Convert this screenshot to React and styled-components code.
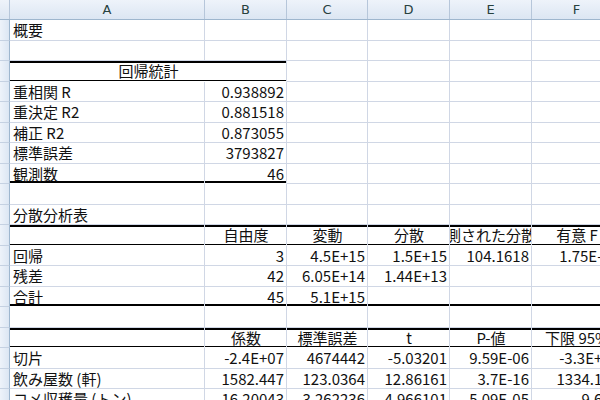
import React from "react";
import styled, { createGlobalStyle, css } from "styled-components";

const Global = createGlobalStyle`
  html, body { margin: 0; padding: 0; background: #fff; overflow: hidden; }
  body { font-family: "Noto Sans CJK JP", "DejaVu Sans", sans-serif; }
`;

const Sheet = styled.div`
  width: 600px;
  height: 400px;
  overflow: hidden;
`;

const COLS = "10px 195px 82px 81px 82px 82px 90px";

const HeaderRow = styled.div`
  display: grid;
  grid-template-columns: ${COLS};
  height: 20px;
  background: linear-gradient(#eef3fa, #dce6f3);
  border-bottom: 1px solid #9eb6ce;
  box-sizing: border-box;
`;

const ColHead = styled.div`
  display: flex;
  align-items: center;
  justify-content: center;
  font-family: "DejaVu Sans", sans-serif;
  font-size: 13px;
  color: #27413e;
  border-right: 1px solid #b6c6da;
`;

const Row = styled.div`
  display: grid;
  grid-template-columns: ${COLS};
  height: 20.5px;
`;

const RowHead = styled.div`
  background: linear-gradient(90deg, #eef3fa, #dce6f3);
  border-right: 1px solid #9eb6ce;
  border-bottom: 1px solid #c5d1e2;
  box-sizing: border-box;
`;

const Cell = styled.div`
  box-sizing: border-box;
  display: flex;
  align-items: center;
  justify-content: ${(p) => (p.$al === "r" ? "flex-end" : p.$al === "c" ? "center" : "flex-start")};
  padding: 0 2px 0 3px;
  overflow: hidden;
  white-space: nowrap;
  font-size: 15px;
  line-height: 1;
  color: #111;
  border-right: 1px solid #d0d7e5;
  border-bottom: 1px solid #d0d7e5;
  ${(p) => {
    const s = [];
    if (p.$top === "thick") s.push("inset 0 2px 0 #000");
    if (p.$top === "thin") s.push("inset 0 1px 0 #000");
    if (p.$bot === "thick") s.push("inset 0 -2px 0 #000");
    if (p.$bot === "thin") s.push("inset 0 -1px 0 #000");
    return s.length ? css`box-shadow: ${s.join(", ")};` : "";
  }}
  ${(p) => (p.$bot ? "border-bottom-color: transparent;" : "")}
  ${(p) => (p.$wide ? "grid-column: 2 / span 2;" : "")}
`;

const rows = [
  { c: ["概要"] },
  { c: [] },
  { c: ["回帰統計"], top: "thick", bot: "thin", span: 2, merged: true },
  { c: ["重相関 R", "0.938892"] },
  { c: ["重決定 R2", "0.881518"] },
  { c: ["補正 R2", "0.873055"] },
  { c: ["標準誤差", "3793827"] },
  { c: ["観測数", "46"], bot: "thick", span: 2 },
  { c: [] },
  { c: ["分散分析表"] },
  { c: ["", "自由度", "変動", "分散", "観測された分散比", "有意 F"], al: ["l", "c", "c", "c", "c", "c"], top: "thick", bot: "thin", span: 6 },
  { c: ["回帰", "3", "4.5E+15", "1.5E+15", "104.1618", "1.75E-19"] },
  { c: ["残差", "42", "6.05E+14", "1.44E+13"] },
  { c: ["合計", "45", "5.1E+15"], bot: "thick", span: 6 },
  { c: [] },
  { c: ["", "係数", "標準誤差", "t", "P-値", "下限 95%"], al: ["l", "c", "c", "c", "c", "c"], top: "thick", bot: "thin", span: 6 },
  { c: ["切片", "-2.4E+07", "4674442", "-5.03201", "9.59E-06", "-3.3E+07"] },
  { c: ["飲み屋数 (軒)", "1582.447", "123.0364", "12.86161", "3.7E-16", "1334.142"] },
  { c: ["コメ収穫量 (トン)", "16.20043", "3.262236", "4.966101", "5.09E-05", "9.626"] },
];

export default function App() {
  return (
    <Sheet>
      <Global />
      <HeaderRow>
        <ColHead />
        {["A", "B", "C", "D", "E", "F"].map((l) => (
          <ColHead key={l}>{l}</ColHead>
        ))}
      </HeaderRow>
      {rows.map((r, i) => (
        <Row key={i}>
          <RowHead />
          {(r.merged ? [0, 2, 3, 4, 5] : [0, 1, 2, 3, 4, 5]).map((j) => {
            const inSpan = r.span && j < r.span;
            const al = r.merged && j === 0 ? "c" : r.al ? r.al[j] || "r" : j === 0 ? "l" : "r";
            return (
              <Cell
                key={j}
                $al={al}
                $wide={r.merged && j === 0}
                $top={inSpan ? r.top : undefined}
                $bot={inSpan ? r.bot : undefined}
              >
                {r.c[j] || ""}
              </Cell>
            );
          })}
        </Row>
      ))}
    </Sheet>
  );
}
